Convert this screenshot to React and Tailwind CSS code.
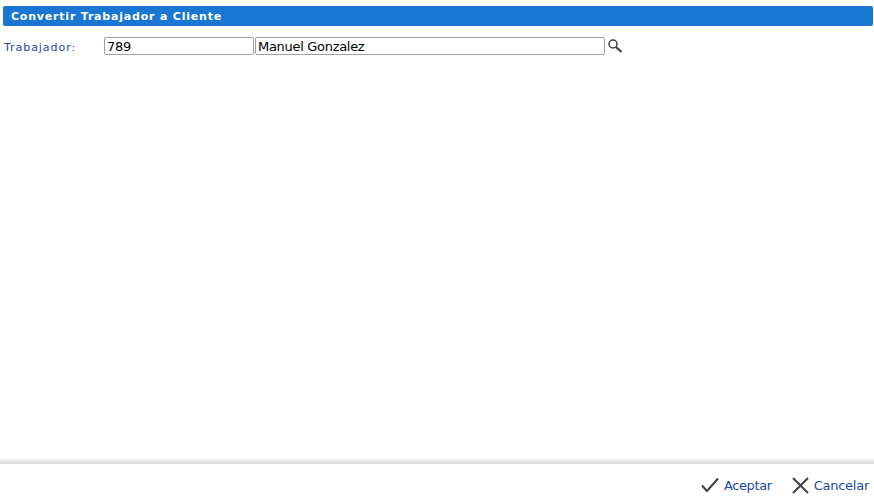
const App = () => {
  return (
    <div className="flex flex-col w-[874px] h-[501px] bg-white font-['DejaVu_Sans',sans-serif] overflow-hidden">
      <main className="flex-1 pt-[6px] pl-[3px] pr-[1px]">
        <h1 className="h-[20px] pl-[8px] pt-[1px] rounded-[2px] bg-[#1976d2] text-[11px] leading-[20px] font-bold tracking-[0.8px] text-white">
          Convertir Trabajador a Cliente
        </h1>
        <div className="flex items-center mt-[11px] h-[18px]">
          <label className="w-[101px] pl-[1px] pt-[4px] text-[11px] tracking-[0.95px] text-[#1549a8]">Trabajador:</label>
          <input
            className="w-[150px] h-[18px] px-[2px] pt-[2px] border border-[#a0a0a0] rounded-[2px] text-[13px] tracking-[-0.3px] text-black outline-none"
            type="text"
            defaultValue="789"
          />
          <input
            className="w-[350px] h-[18px] ml-[1px] px-[2px] pt-[2px] border border-[#a0a0a0] rounded-[2px] text-[13px] tracking-[-0.3px] text-black outline-none"
            type="text"
            defaultValue="Manuel Gonzalez"
          />
          <svg className="ml-[2px] mb-[1px]" width="16" height="16" viewBox="0 0 16 16" fill="none" stroke="#3c3c3c">
            <circle cx="6" cy="6" r="4" strokeWidth="1.5" />
            <path d="M9 9l5.5 5" strokeWidth="2.2" />
          </svg>
        </div>
      </main>
      <div className="h-[7px] bg-gradient-to-b from-white to-[#d8d8d8]" />
      <footer className="flex items-center justify-end h-[37px] pt-[7px] pr-[5px] gap-[20px] text-[13px] text-[#1549a8]">
        <button className="flex items-center gap-[5px]" type="button">
          <svg className="mb-[2px]" width="18" height="16" viewBox="0 0 18 16" fill="none" stroke="#404040" strokeWidth="2">
            <path d="M1 8.5l5 5.5L17 1.5" />
          </svg>
          <span className="tracking-[-0.4px]">Aceptar</span>
        </button>
        <button className="flex items-center gap-[5px]" type="button">
          <svg className="mb-[2px]" width="17" height="17" viewBox="0 0 17 17" fill="none" stroke="#404040" strokeWidth="2">
            <path d="M1 1l15 15M16 1L1 16" />
          </svg>
          <span className="tracking-[-0.25px]">Cancelar</span>
        </button>
      </footer>
    </div>
  );
};

export default App;
